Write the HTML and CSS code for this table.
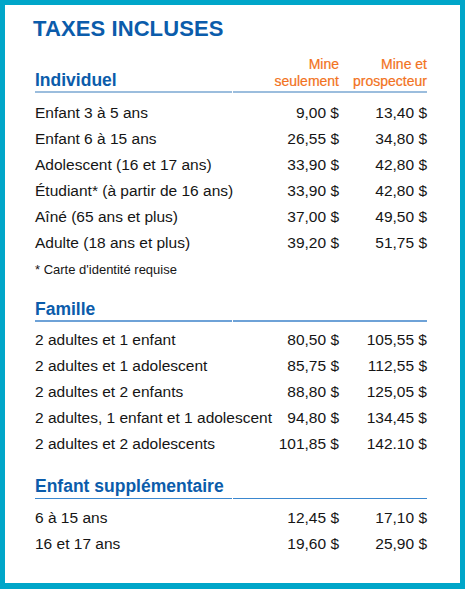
FILE: index.html
```html
<!DOCTYPE html>
<html lang="fr">
<head>
    <meta charset="UTF-8">
    <meta name="viewport" content="width=device-width, initial-scale=1.0">
    <title>Tarifs - Taxes incluses</title>
    <link rel="stylesheet" href="styles.css">
</head>
<body>
    <div class="frame">
        <h1 class="title">TAXES INCLUSES</h1>

        <div class="section section-first">
            <div class="head">
                <div class="head-label">Individuel</div>
                <div class="head-col">Mine<br>seulement</div>
                <div class="head-col">Mine et<br>prospecteur</div>
            </div>
            <div class="rows">
                <div class="row"><span>Enfant 3 à 5 ans</span><span class="price">9,00 $</span><span class="price">13,40 $</span></div>
                <div class="row"><span>Enfant 6 à 15 ans</span><span class="price">26,55 $</span><span class="price">34,80 $</span></div>
                <div class="row"><span>Adolescent (16 et 17 ans)</span><span class="price">33,90 $</span><span class="price">42,80 $</span></div>
                <div class="row"><span>Étudiant* (à partir de 16 ans)</span><span class="price">33,90 $</span><span class="price">42,80 $</span></div>
                <div class="row"><span>Aîné (65 ans et plus)</span><span class="price">37,00 $</span><span class="price">49,50 $</span></div>
                <div class="row"><span>Adulte (18 ans et plus)</span><span class="price">39,20 $</span><span class="price">51,75 $</span></div>
            </div>
            <p class="note">* Carte d'identité requise</p>
        </div>

        <div class="section">
            <div class="head head-mid">
                <div class="head-label">Famille</div>
                <div class="head-col"></div>
            </div>
            <div class="rows">
                <div class="row"><span>2 adultes et 1 enfant</span><span class="price">80,50 $</span><span class="price">105,55 $</span></div>
                <div class="row"><span>2 adultes et 1 adolescent</span><span class="price">85,75 $</span><span class="price">112,55 $</span></div>
                <div class="row"><span>2 adultes et 2 enfants</span><span class="price">88,80 $</span><span class="price">125,05 $</span></div>
                <div class="row"><span>2 adultes, 1 enfant et 1 adolescent</span><span class="price">94,80 $</span><span class="price">134,45 $</span></div>
                <div class="row"><span>2 adultes et 2 adolescents</span><span class="price">101,85 $</span><span class="price">142.10 $</span></div>
            </div>
        </div>

        <div class="section">
            <div class="head head-dark">
                <div class="head-label">Enfant supplémentaire</div>
                <div class="head-col"></div>
            </div>
            <div class="rows">
                <div class="row"><span>6 à 15 ans</span><span class="price">12,45 $</span><span class="price">17,10 $</span></div>
                <div class="row"><span>16 et 17 ans</span><span class="price">19,60 $</span><span class="price">25,90 $</span></div>
            </div>
        </div>
    </div>
</body>
</html>
```

FILE: styles.css
```css
:root {
    --frame-color: #00a6c9;
    --title-color: #0b5cab;
    --orange: #f27221;
    --text-color: #151515;
    --line-light: #9bbddd;
    --line-mid: #6ea2d7;
    --line-dark: #3a87cf;
}

* {
    margin: 0;
    padding: 0;
    box-sizing: border-box;
}

body {
    font-family: 'Liberation Sans', Arial, Helvetica, sans-serif;
    color: var(--text-color);
    background: #ffffff;
}

.frame {
    width: 465px;
    height: 589px;
    border: 5px solid var(--frame-color);
    border-bottom-width: 6px;
    padding: 10.5px 33px 0 30px;
    background: #ffffff;
}

.title {
    font-size: 22px;
    line-height: 26px;
    font-weight: 700;
    color: var(--title-color);
    margin-left: -2px;
    letter-spacing: 0.1px;
    margin-bottom: 14px;
}

.section {
    margin-bottom: 19px;
}

.section-first {
    margin-bottom: 20px;
}

.head,
.row {
    display: grid;
    grid-template-columns: 198px 106px 88px;
}

.head {
    align-items: end;
}

.head-label {
    font-size: 17.5px;
    line-height: 20px;
    font-weight: 700;
    color: var(--title-color);
    margin-right: 1px;
    padding-bottom: 1px;
    border-bottom: 2px solid var(--line-light);
}

.head-col {
    font-size: 14px;
    line-height: 17px;
    color: var(--orange);
    text-align: right;
    padding-bottom: 1.4px;
    border-bottom: 2px solid var(--line-light);
    -webkit-text-stroke: 0.2px var(--orange);
}

.head-mid .head-label,
.head-mid .head-col {
    border-bottom-color: var(--line-mid);
}

.head-mid .head-col,
.head-dark .head-col {
    grid-column: 2 / 4;
    padding-bottom: 1px;
}

.head-dark .head-label,
.head-dark .head-col {
    border-bottom: 1px solid var(--line-dark);
    padding-bottom: 2px;
}

.rows {
    margin-top: 5.5px;
}

.section-first .rows {
    margin-top: 7px;
}

.row {
    font-size: 15.5px;
    line-height: 26px;
    white-space: nowrap;
}

.price {
    text-align: right;
}

.note {
    font-size: 13px;
    line-height: 18px;
    margin-top: 5px;
    margin-bottom: 4px;
}
```
